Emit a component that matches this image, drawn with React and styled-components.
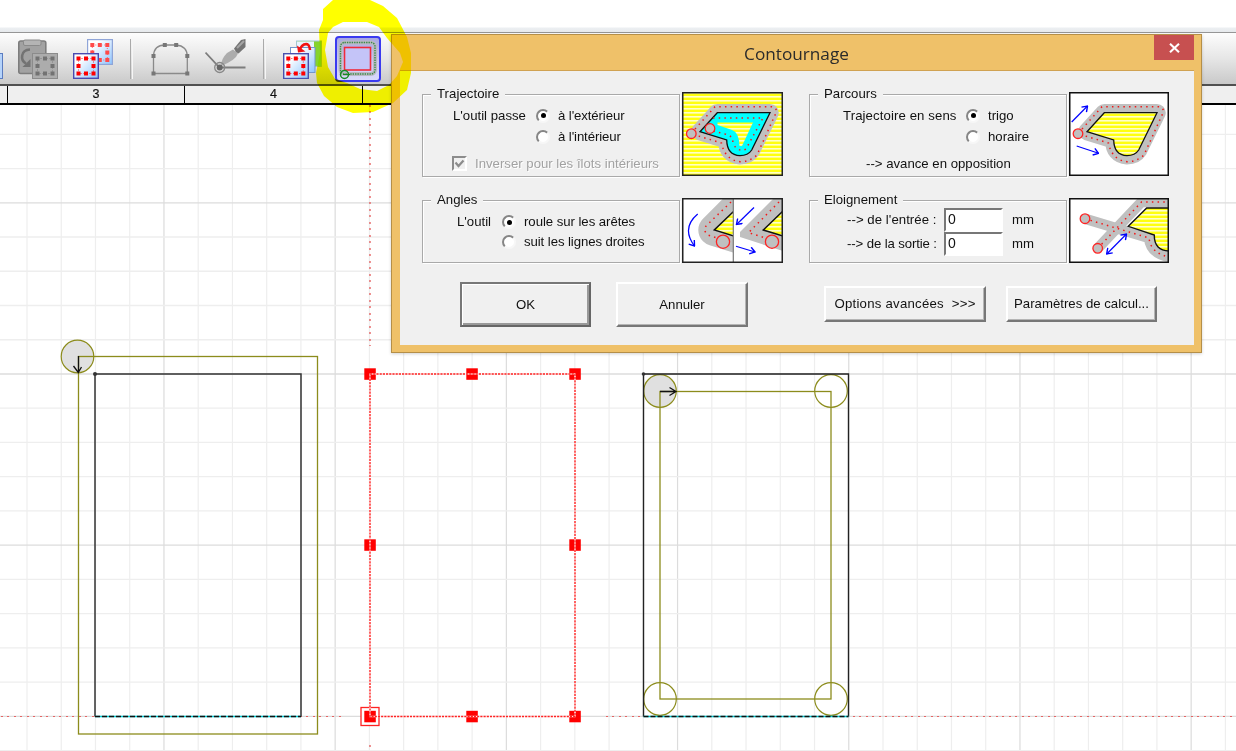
import React from 'react';
import styled, { createGlobalStyle } from 'styled-components';

const GlobalStyle = createGlobalStyle`
  * { box-sizing: border-box; }
  html, body { margin: 0; padding: 0; overflow: hidden; background: #fff; }
  svg { display: block; flex: none; }
`;

const Screen = styled.div`
  position: relative;
  display: flex;
  flex-direction: column;
  width: 1236px;
  height: 751px;
  overflow: hidden;
  background: #fff;
  color: #111;
  font: 13.2px/16px 'Liberation Sans', Arial, sans-serif;
`;

const TopStrip = styled.div`
  height: 33px;
  border-bottom: 1px solid #969696;
  background: linear-gradient(#fff 27px, #eceff2 28px, #e6e9ec 32px);
`;

const Toolbar = styled.div`
  display: flex;
  align-items: center;
  height: 51px;
  background: linear-gradient(#fdfdfd, #e6e6e6 50%, #c9c9c9);
`;

const Spacer = styled.div`
  flex: none;
  width: ${(p) => p.$w}px;
`;

const Separator = styled.div`
  width: 3px;
  height: 40px;
  border-left: 1.5px solid #aaa;
  border-right: 1.5px solid #f6f6f6;
`;

const ActiveTool = styled.div`
  display: flex;
  align-items: center;
  justify-content: center;
  width: 46px;
  height: 46px;
  border: 2px solid #3a3af0;
  border-radius: 4px;
  background: linear-gradient(#a9a9e0, #c6c6f2 50%, #d9d9fb);
`;

const Ruler = styled.div`
  display: flex;
  height: 21px;
  border-top: 2px solid #505050;
  border-bottom: 2px solid #000;
  background: #efefef;
`;

const RulerCell = styled.div`
  flex: none;
  width: ${(p) => p.$w}px;
  border-right: 1px solid #000;
  text-align: center;
  font-size: 12.5px;
  line-height: 17px;
  -webkit-text-stroke: 0.2px #111;
`;

const Dialog = styled.div`
  position: absolute;
  left: 391px;
  top: 34px;
  width: 811px;
  height: 319px;
  display: flex;
  flex-direction: column;
  padding: 0 7px 7px 8px;
  border: 1px solid #b58f48;
  background: #efc169;
  box-shadow: 0 1px 3px rgba(0, 0, 0, 0.18);
`;

const TitleBar = styled.div`
  display: flex;
  align-items: flex-start;
  height: 36px;
  border-bottom: 1px solid #d0a252;
`;

const Title = styled.div`
  flex: 1;
  padding-left: 39px;
  text-align: center;
  color: #2b2b2b;
  font: 17.2px/37px 'Open Sans', 'Noto Sans', sans-serif;
`;

const Close = styled.button`
  display: flex;
  align-items: center;
  justify-content: center;
  width: 40px;
  height: 25px;
  padding: 0;
  border: 0;
  background: #c75050;
`;

const Body = styled.div`
  flex: 1;
  display: flex;
  flex-direction: column;
  padding: 21px 25px 0 22px;
  background: #f0f0f0;
`;

const Columns = styled.div`
  display: flex;
  justify-content: space-between;
  height: ${(p) => p.$h}px;
`;

const Panel = styled.div`
  display: flex;
  width: ${(p) => p.$w}px;
  justify-content: space-between;
  align-items: flex-start;
`;

const Group = styled.div`
  display: flex;
  flex-direction: column;
  align-items: flex-start;
  width: 258px;
  height: ${(p) => p.$h}px;
  margin-top: 2px;
  border: 1px solid #a9a9a9;
  box-shadow: 1px 1px 0 #fff, inset 1px 1px 0 #fff;
`;

const Legend = styled.div`
  height: 16px;
  margin: -9px 0 0 8px;
  padding: 0 6px;
  background: #f0f0f0;
  letter-spacing: ${(p) => p.$ls || 0}px;
`;

const Line = styled.div`
  display: grid;
  grid-template-columns: ${(p) => p.$cols};
  align-items: center;
  height: ${(p) => p.$h || 21}px;
  margin-top: ${(p) => p.$mt || 0}px;
  padding-left: ${(p) => p.$pl || 0}px;
  white-space: nowrap;
`;

const Label = styled.span`
  letter-spacing: ${(p) => p.$ls || 0}px;
  white-space: pre;
`;

const Disabled = styled(Label)`
  color: #a2a2a2;
  text-shadow: 1px 1px 0 #fff;
`;

const RadioDot = styled.span`
  display: flex;
  align-items: center;
  justify-content: center;
  width: 14px;
  height: 14px;
  margin-left: -1px;
  border: 2px solid;
  border-color: #858585 #f7f7f7 #f7f7f7 #858585;
  border-radius: 50%;
  background: #fff;

  &::after {
    content: '';
    width: 5px;
    height: 5px;
    border-radius: 50%;
    background: ${(p) => (p.$on ? '#000' : 'transparent')};
  }
`;

const Check = styled.span`
  width: 15px;
  height: 15px;
  margin-left: -1px;
  border: 2px solid;
  border-color: #8c8c8c #fff #fff #8c8c8c;
  background: #f0f0f0;
`;

const Field = styled.input`
  width: 59px;
  height: 24px;
  padding: 0 2px 2px;
  border: 2px solid;
  border-color: #777 #fff #fff #777;
  outline: 0;
  background: #fff;
  color: #111;
  font: inherit;
  font-size: 14px;
`;

const Actions = styled.div`
  display: flex;
  align-items: flex-start;
  padding-left: 38px;
`;

const Button = styled.button`
  flex: none;
  width: ${(p) => p.$w}px;
  height: ${(p) => p.$h}px;
  margin: ${(p) => p.$mt || 0}px 0 0 ${(p) => p.$ml || 0}px;
  padding: 0;
  border: solid;
  border-width: 2px;
  border-color: ${(p) => (p.$primary ? '#777 #666 #666 #777' : '#fff #777 #777 #fff')};
  box-shadow: ${(p) =>
    p.$primary ? 'inset 1px 1px 0 #fff, inset -2px -2px 0 #999' : 'inset -1px -1px 0 #b5b5b5'};
  background: #f0f0f0;
  color: #111;
  font: inherit;
  letter-spacing: ${(p) => p.$ls || 0}px;
  white-space: pre;
`;

const Highlight = styled.svg`
  position: absolute;
  left: 0;
  top: 0;
  mix-blend-mode: multiply;
  pointer-events: none;
`;

const HiddenDefs = styled.svg`
  position: absolute;
`;

function Defs() {
  return (
    <HiddenDefs width="0" height="0">
      <defs>
        <pattern id="stripes" width="4" height="4" patternUnits="userSpaceOnUse">
          <rect width="4" height="4" fill="#ffff10" />
          <rect width="4" height="1.6" fill="#ffffc8" />
        </pattern>
        <linearGradient id="sheet" x1="0" y1="0" x2="1" y2="1">
          <stop offset="0.25" stopColor="#ffffff" />
          <stop offset="1" stopColor="#8cc4ff" />
        </linearGradient>
        <marker id="tip" viewBox="0 0 8 8" refX="7" refY="4" markerWidth="8" markerHeight="8" orient="auto-start-reverse" markerUnits="userSpaceOnUse">
          <path d="M2 0.5L7 4L2 7.5" fill="none" stroke="#00f" strokeWidth="1.4" />
        </marker>
      </defs>
    </HiddenDefs>
  );
}

function Selection({ x, y, color }) {
  const p = [0, 7.5, 15];
  return (
    <g fill={color}>
      <rect x={x + 2} y={y + 2} width="15" height="15" fill="none" stroke={color} strokeWidth="0.8" strokeDasharray="1 2" />
      {p.flatMap((a) => p.filter((b) => !(a === 7.5 && b === 7.5)).map((b) => (
        <rect key={`${a}-${b}`} x={x + a} y={y + b} width="4" height="4" />
      )))}
    </g>
  );
}

function ClippedIcon() {
  return (
    <svg width="3" height="40" viewBox="0 38 3 40">
      <rect x="-22" y="52.5" width="24.5" height="25" fill="#b5d3fa" stroke="#5b7cc0" />
    </svg>
  );
}

function PasteGreyIcon() {
  return (
    <svg width="40" height="40" viewBox="18 38 40 40">
      <rect x="18.8" y="40" width="27" height="32.5" rx="2" fill="#a2a2a2" stroke="#7d7d7d" strokeWidth="1.6" />
      <rect x="23.5" y="39" width="17.5" height="5.5" rx="1.5" fill="#b4b4b4" stroke="#8a8a8a" />
      <path d="M30 48.5C20.5 49 20 59 26 62.5" fill="none" stroke="#737373" strokeWidth="2.6" />
      <path d="M22.5 66H30.5V58Z" fill="#737373" />
      <rect x="32.5" y="52.5" width="25" height="25" fill="#acacac" stroke="#8b8b8b" />
      <Selection x={35.5} y={55.5} color="#727272" />
    </svg>
  );
}

function PasteIcon() {
  return (
    <svg width="40" height="40" viewBox="73 38 40 40">
      <rect x="87.6" y="38.6" width="24.8" height="24.8" fill="url(#sheet)" stroke="#8fa5d8" strokeWidth="1.2" />
      <Selection x={90.3} y={42} color="#ff4b4b" />
      <rect x="73.7" y="52.7" width="24.6" height="24.6" fill="url(#sheet)" stroke="#4a4ab0" strokeWidth="1.4" />
      <Selection x={76.5} y={55.5} color="#f00" />
    </svg>
  );
}

function ArchIcon() {
  const nodes = [[153.5, 72.5], [153.5, 55], [164.8, 44], [176.2, 44], [187.3, 55], [187.3, 72.5]];
  return (
    <svg width="40" height="40" viewBox="151 38 40 40">
      <path d="M153.5 72.5V55Q154 44 164.8 44H176.2Q187 45 187.3 55V72.5Z" fill="none" stroke="#8a8a8a" strokeWidth="1.3" />
      {nodes.map(([x, y]) => (
        <rect key={`${x}-${y}`} x={x - 2} y={y - 2} width="4" height="4" fill="#777" />
      ))}
    </svg>
  );
}

function BrushIcon() {
  return (
    <svg width="42" height="40" viewBox="205 38 42 40">
      <path d="M205.5 51.5L219.5 66.5H245.5" fill="none" stroke="#7d7d7d" strokeWidth="1.8" />
      <path d="M221 65Q221 58 227 52L233 48.5L238 52.5Q236 59 221 65Z" fill="#acacac" />
      <path d="M234 47.5L241 39L245.5 38V46L238.5 52.5Q235 51 234 47.5Z" fill="#747474" />
      <path d="M237 47L244 40" stroke="#a4a4a4" strokeWidth="2" />
      <circle cx="219.7" cy="66.5" r="5" fill="none" stroke="#888" strokeWidth="1.3" />
      <circle cx="219.7" cy="66.5" r="3" fill="#666" />
    </svg>
  );
}

function DuplicateIcon() {
  return (
    <svg width="40" height="40" viewBox="282 38 40 40">
      <rect x="296.6" y="40" width="24.8" height="25.4" fill="#86d32d" stroke="#9fc3d5" />
      <rect x="297" y="40.5" width="17" height="12" fill="#e8f3ff" />
      <rect x="290.5" y="46.5" width="24.5" height="25" fill="url(#sheet)" stroke="#7396cb" />
      <path d="M310 49Q309.5 41.5 304 43.5Q301 45 300 48" fill="none" stroke="#f11212" strokeWidth="2.6" />
      <path d="M297 44.5L298 51.5L305.5 50.5Z" fill="#f11212" />
      <rect x="283.7" y="52.7" width="24.6" height="24.8" fill="url(#sheet)" stroke="#4a50ad" strokeWidth="1.4" />
      <Selection x={286.3} y={55.5} color="#f00" />
    </svg>
  );
}

function ContourIcon() {
  return (
    <svg width="42" height="42" viewBox="337 37 42 42">
      <rect x="340.5" y="41.5" width="34.5" height="31.5" rx="4" fill="none" stroke="#b9b9c2" strokeWidth="4" />
      <rect x="340.5" y="41.5" width="34.5" height="31.5" rx="4" fill="none" stroke="#3c8a48" strokeWidth="1.4" strokeDasharray="1.4 1" />
      <rect x="344.5" y="46.5" width="26" height="22.5" fill="#c4c4f8" stroke="#f02a3a" strokeWidth="1.6" />
      <circle cx="344.5" cy="73.5" r="4" fill="none" stroke="#158a22" strokeWidth="1.5" />
      <path d="M343 73.5H350" stroke="#158a22" />
    </svg>
  );
}

const SHAPE = 'M18 39.7L35.3 20.7H88L69.7 58Q66 63.7 58 63.7Q45 63 44.7 48Z';
const TRACK = 'M13 37L33 14.7H90Q96 16 93.5 22L75 63Q68 69.7 58 69.7Q43 68 39.5 51L13 43';
const dots = { fill: 'none', stroke: '#f21818', strokeWidth: 1.5, strokeDasharray: '1.5 4.2' };
const tool = { fill: '#c0c0c0', stroke: '#f22', strokeWidth: 1.3 };
const arrow = { fill: 'none', stroke: '#00f', strokeWidth: 1.2, markerEnd: 'url(#tip)' };

function TrajectoryPicture() {
  return (
    <svg width="101" height="84" viewBox="0 0 101 84">
      <rect width="101" height="84" fill="url(#stripes)" />
      <path d={SHAPE} fill="#c0c0c0" stroke="#c0c0c0" strokeWidth="17.5" strokeLinejoin="round" />
      <path d="M10 41.7L18 39.7" stroke="#c0c0c0" strokeWidth="9" strokeLinecap="round" />
      <path d={SHAPE} fill="#00ffff" stroke="#111" strokeWidth="1.3" />
      <path d="M35.5 30.5H71L60 54H57.5Q57 40 50 38L35.5 33Z" fill="url(#stripes)" />
      <path d={TRACK} {...dots} />
      <path d="M31 26H81L64 57Q57 61 51 52Q51 43 43 42L31 39" {...dots} />
      <circle cx="9.3" cy="41.7" r="4.8" {...tool} />
      <circle cx="28" cy="36.5" r="4.8" {...tool} />
      <rect x="0.75" y="0.75" width="99.5" height="82.5" fill="none" stroke="#222" strokeWidth="1.5" />
    </svg>
  );
}

function CoursePicture() {
  return (
    <svg width="100" height="84" viewBox="0 0 100 84">
      <rect width="100" height="84" fill="#fff" />
      <path d={SHAPE} fill="#c0c0c0" stroke="#c0c0c0" strokeWidth="17.5" strokeLinejoin="round" />
      <path d="M10 41.7L18 39.7" stroke="#c0c0c0" strokeWidth="9" strokeLinecap="round" />
      <path d={SHAPE} fill="url(#stripes)" stroke="#111" strokeWidth="1.3" />
      <path d={TRACK} {...dots} />
      <circle cx="9" cy="41.7" r="4.8" {...tool} />
      <path d="M2.7 30L18.5 14" {...arrow} />
      <path d="M7.7 54L29.5 61.3" {...arrow} />
      <rect x="0.75" y="0.75" width="98.5" height="82.5" fill="none" stroke="#111" strokeWidth="1.5" />
    </svg>
  );
}

function AnglesPicture() {
  return (
    <svg width="101" height="65" viewBox="0 0 101 65">
      <rect width="101" height="65" fill="#fff" />
      <svg width="51" height="65">
        <path d="M80 -15.7L32.3 32L80 46.5Z" fill="#c0c0c0" stroke="#c0c0c0" strokeWidth="32" strokeLinejoin="round" />
        <path d="M80 -14L32.3 32L80 46.5Z" fill="url(#stripes)" stroke="#111" strokeWidth="1.5" />
      </svg>
      <path d="M49 4L25 27Q20 32 26 37L35 40" {...dots} />
      <circle cx="41" cy="43.7" r="6.6" {...tool} />
      <path d="M15.7 16Q-1 30 12.5 48" {...arrow} />
      <path d="M92 0L58 34V39L101 53V0Z" fill="#c0c0c0" />
      <path d="M101 13L81.3 32L101 38Z" fill="url(#stripes)" stroke="#111" strokeWidth="1.5" />
      <path d="M97 4L66.5 34.7L82 39.5" {...dots} />
      <circle cx="90" cy="43.7" r="6.6" {...tool} />
      <path d="M72 9.5L54.5 26.5" {...arrow} />
      <path d="M54 48.3L73 54" {...arrow} />
      <path d="M51.3 0V65" stroke="#777" strokeWidth="1.2" />
      <rect x="0.75" y="0.75" width="99.5" height="63.5" fill="none" stroke="#222" strokeWidth="1.5" />
    </svg>
  );
}

function DistancePicture() {
  const inPath = 'M16 20.7L80 40Q82 56 101 59';
  const outPath = 'M28.7 50.3L72.5 4H101';
  return (
    <svg width="100" height="65" viewBox="0 0 100 65">
      <rect width="100" height="65" fill="#fff" />
      <path d={inPath} fill="none" stroke="#c0c0c0" strokeWidth="10.5" />
      <path d={outPath} fill="none" stroke="#c0c0c0" strokeWidth="10.5" />
      <path d="M101 10H77.7L59.3 28.3L85.3 37Q85 53 101 53Z" fill="url(#stripes)" stroke="#111" strokeWidth="1.4" />
      <path d={inPath} {...dots} />
      <path d={outPath} {...dots} />
      <circle cx="16" cy="20.7" r="4.8" {...tool} />
      <circle cx="28.7" cy="50.3" r="4.8" {...tool} />
      <path d="M57.5 36L37.7 56" {...arrow} markerStart="url(#tip)" />
      <rect x="0.75" y="0.75" width="98.5" height="63.5" fill="none" stroke="#111" strokeWidth="1.5" />
    </svg>
  );
}

function Drawing() {
  const cols = Array.from({ length: 36 }, (_, i) => i);
  const rows = Array.from({ length: 19 }, (_, i) => i);
  const handles = [[370, 374], [472, 374], [575, 374], [370, 545], [575, 545], [370, 716.5], [472, 716.5], [575, 716.5]];
  const olive = { fill: 'none', stroke: '#8c8c1c', strokeWidth: 1.3 };
  return (
    <svg width="1236" height="646" viewBox="0 105 1236 646">
      {cols.map((i) => (
        <path key={i} d={`M${27 + i * 34.24} 105V751`} stroke={i % 5 === 4 ? '#dcdcdc' : '#eeeeee'} strokeWidth="1.2" />
      ))}
      {rows.map((i) => (
        <path key={i} d={`M0 ${134.3 + i * 34.24}H1236`} stroke={i % 5 === 2 ? '#dcdcdc' : '#eeeeee'} strokeWidth="1.3" />
      ))}
      <path d="M370 105V346M370 745V751" stroke="#e56464" strokeWidth="1.4" strokeDasharray="2 4 2 5" />
      <path d="M1 716.5H342M606 716.5H1236" stroke="#e56464" strokeWidth="1.2" strokeDasharray="2 4 2 5" />

      <circle cx="77.5" cy="356.5" r="16.3" fill="#e0e0e0" stroke="#8c8c1c" strokeWidth="1.2" />
      <rect x="78.5" y="356.5" width="239" height="377.5" {...olive} />
      <path d="M95 716.5V374H301V716.5" fill="none" stroke="#333" strokeWidth="1.5" />
      <path d="M95 716.5H301" stroke="#00d0d8" strokeWidth="1.3" />
      <path d="M95 716.5H301" stroke="#111" strokeWidth="1.3" strokeDasharray="5 2" />
      <circle cx="95" cy="374" r="2" fill="#333" />
      <path d="M78.5 356V372.5M73.5 366L78.3 372.5L81.5 367" fill="none" stroke="#111" strokeWidth="1.3" />

      <circle cx="660" cy="391" r="16.3" fill="#e0e0e0" stroke="#8c8c1c" strokeWidth="1.2" />
      {[[831, 391], [660, 699], [831, 699]].map(([x, y]) => (
        <circle key={`${x}-${y}`} cx={x} cy={y} r="16.3" fill="#fff" fillOpacity="0.9" stroke="#8c8c1c" strokeWidth="1.2" />
      ))}
      <rect x="660" y="391.5" width="171" height="307.5" {...olive} />
      <path d="M643.5 716.5V374H848.5V716.5" fill="none" stroke="#222" strokeWidth="1.4" />
      <path d="M643.5 716.5H848.5" stroke="#00d0d8" strokeWidth="1.3" />
      <path d="M643.5 716.5H848.5" stroke="#111" strokeWidth="1.3" strokeDasharray="5 2" />
      <circle cx="643.5" cy="374" r="1.8" fill="#333" />
      <path d="M660 391.5H676M669.5 387.5L676 391.5L669.5 395.5" fill="none" stroke="#111" strokeWidth="1.3" />

      <rect x="361" y="707.5" width="18" height="18" fill="#fff" stroke="#f22" strokeWidth="1.3" />
      {handles.map(([x, y]) => (
        <rect key={`${x}-${y}`} x={x - 5.7} y={y - 5.7} width="11.5" height="11.5" fill="#f00" />
      ))}
      <rect x="370" y="374" width="205" height="342.5" fill="none" stroke="#fff" strokeWidth="1.4" />
      <rect x="370" y="374" width="205" height="342.5" fill="none" stroke="#f22" strokeWidth="1.4" strokeDasharray="2.2 1" />
    </svg>
  );
}

function Option({ checked, children, ls }) {
  return (
    <>
      <RadioDot $on={checked} role="radio" aria-checked={!!checked} />
      <Label $ls={ls}>{children}</Label>
    </>
  );
}

function ContourDialog() {
  return (
    <Dialog>
      <TitleBar>
        <Title>Contournage</Title>
        <Close aria-label="Fermer">
          <svg width="11" height="10" viewBox="0 0 11 10">
            <path d="M1 0.8L10 9.2M10 0.8L1 9.2" stroke="#fff" strokeWidth="2.1" />
          </svg>
        </Close>
      </TitleBar>
      <Body>
        <Columns $h={106}>
          <Panel $w={361}>
            <Group $h={83}>
              <Legend $ls={0.05}>Trajectoire</Legend>
              <Line $mt={3} $pl={30} $cols="84px 21px auto">
                <Label>L'outil passe</Label>
                <Option checked ls={-0.1}>à l'extérieur</Option>
              </Line>
              <Line $pl={30} $cols="84px 21px auto">
                <span />
                <Option ls={-0.1}>à l'intérieur</Option>
              </Line>
              <Line $mt={6} $pl={30} $cols="22px auto">
                <Check>
                  <svg width="11" height="11" viewBox="0 0 11 11">
                    <path d="M1.5 4.5L4.5 8L9.5 2.5" fill="none" stroke="#8c8c8c" strokeWidth="2.2" />
                  </svg>
                </Check>
                <Disabled>Inverser pour les îlots intérieurs</Disabled>
              </Line>
            </Group>
            <TrajectoryPicture />
          </Panel>
          <Panel $w={360}>
            <Group $h={83}>
              <Legend>Parcours</Legend>
              <Line $mt={3} $pl={33} $cols="124px 21px auto">
                <Label $ls={0.1}>Trajectoire en sens</Label>
                <Option checked>trigo</Option>
              </Line>
              <Line $pl={33} $cols="124px 21px auto">
                <span />
                <Option>horaire</Option>
              </Line>
              <Line $mt={6} $pl={56} $cols="auto">
                <Label>{'--> avance en opposition'}</Label>
              </Line>
            </Group>
            <CoursePicture />
          </Panel>
        </Columns>
        <Columns $h={84}>
          <Panel $w={361}>
            <Group $h={63}>
              <Legend>Angles</Legend>
              <Line $mt={4} $pl={34} $h={20} $cols="46px 21px auto">
                <Label>L'outil</Label>
                <Option checked ls={-0.05}>roule sur les arêtes</Option>
              </Line>
              <Line $pl={34} $h={20} $cols="46px 21px auto">
                <span />
                <Option ls={-0.08}>suit les lignes droites</Option>
              </Line>
            </Group>
            <AnglesPicture />
          </Panel>
          <Panel $w={360}>
            <Group $h={63}>
              <Legend>Eloignement</Legend>
              <Line $pl={37} $h={24} $cols="97px 68px auto">
                <Label $ls={0.05}>{"--> de l'entrée :"}</Label>
                <Field defaultValue="0" />
                <Label>mm</Label>
              </Line>
              <Line $pl={37} $h={24} $cols="97px 68px auto">
                <Label $ls={-0.12}>{'--> de la sortie :'}</Label>
                <Field defaultValue="0" />
                <Label>mm</Label>
              </Line>
            </Group>
            <DistancePicture />
          </Panel>
        </Columns>
        <Actions>
          <Button $primary $w={131} $h={45}>OK</Button>
          <Button $ml={25} $w={132} $h={45}>Annuler</Button>
          <Button $ml={76} $mt={4} $w={162} $h={36} $ls={0.25}>{'Options avancées  >>>'}</Button>
          <Button $ml={20} $mt={4} $w={151} $h={36}>Paramètres de calcul...</Button>
        </Actions>
      </Body>
    </Dialog>
  );
}

export default function App() {
  return (
    <Screen>
      <GlobalStyle />
      <Defs />
      <TopStrip />
      <Toolbar>
        <ClippedIcon />
        <Spacer $w={15} />
        <PasteGreyIcon />
        <Spacer $w={15} />
        <PasteIcon />
        <Spacer $w={17} />
        <Separator />
        <Spacer $w={18} />
        <ArchIcon />
        <Spacer $w={14} />
        <BrushIcon />
        <Spacer $w={16} />
        <Separator />
        <Spacer $w={16} />
        <DuplicateIcon />
        <Spacer $w={13} />
        <ActiveTool>
          <ContourIcon />
        </ActiveTool>
      </Toolbar>
      <Ruler>
        <RulerCell $w={8} />
        <RulerCell $w={177}>3</RulerCell>
        <RulerCell $w={178}>4</RulerCell>
      </Ruler>
      <Drawing />
      <ContourDialog />
      <Highlight width="430" height="120" viewBox="0 0 430 120">
        <path
          fill="#ffff00"
          fillRule="evenodd"
          d="M323 9L333 0H370L383 6L397 18L407 37L411 53V73L407 90L393 103L373 112L353 113L337 107L324 96L317 83L316 73L320 53L319 30L323 20Z M328 33L333 27L343 22L367 22L379 27L387 38L400 53L403 62L397 76L389 85L377 91L360 89L347 83L335 79L328 67L325 50Z"
        />
      </Highlight>
    </Screen>
  );
}
